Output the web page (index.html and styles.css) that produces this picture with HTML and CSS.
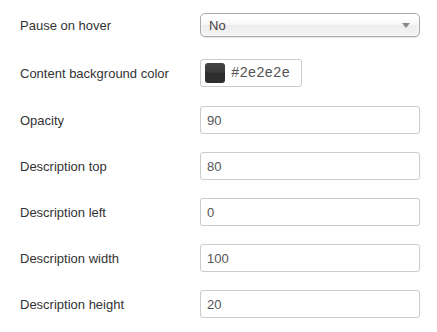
FILE: index.html
```html
<!DOCTYPE html>
<html lang="en">
  <head>
    <meta charset="UTF-8" />
    <meta name="viewport" content="width=device-width, initial-scale=1.0" />
    <title>Slideshow Options</title>
    <link rel="stylesheet" href="styles.css">
  </head>
  <body>
    <div class="options">
      <div class="control-group first">
        <label for="pauseHover">Pause on hover</label>
        <div class="select-box">
          <select id="pauseHover">
            <option value="0" selected>No</option>
            <option value="1">Yes</option>
          </select>
          <span class="arrow"></span>
        </div>
      </div>

      <div class="control-group color-group">
        <label for="bgColor">Content background color</label>
        <div class="color-field">
          <span class="swatch"></span>
          <input type="text" id="bgColor" value="#2e2e2e" />
        </div>
      </div>

      <div class="control-group">
        <label for="opacity">Opacity</label>
        <input type="text" id="opacity" value="90" />
      </div>

      <div class="control-group">
        <label for="descTop">Description top</label>
        <input type="text" id="descTop" value="80" />
      </div>

      <div class="control-group">
        <label for="descLeft">Description left</label>
        <input type="text" id="descLeft" value="0" />
      </div>

      <div class="control-group">
        <label for="descWidth">Description width</label>
        <input type="text" id="descWidth" value="100" />
      </div>

      <div class="control-group">
        <label for="descHeight">Description height</label>
        <input type="text" id="descHeight" value="20" />
      </div>
    </div>
  </body>
</html>
```

FILE: styles.css
```css
body {
  font-family: "Liberation Sans", Arial, sans-serif;
  font-size: 13px;
  margin: 0;
  padding: 13px 0 0 20px;
  background-color: #fff;
  color: #333;
}

.control-group {
  display: flex;
  align-items: center;
  height: 28px;
  margin-bottom: 18px;
}

.control-group.first {
  height: 24px;
  margin-bottom: 22px;
}

.control-group.color-group {
  margin-bottom: 19px;
}

label {
  width: 180px;
  flex-shrink: 0;
}

input[type='text'] {
  box-sizing: border-box;
  width: 220px;
  height: 28px;
  padding: 4px 6px;
  border: 1px solid #ccc;
  border-radius: 3px;
  font-family: "Liberation Sans", Arial, sans-serif;
  font-size: 13px;
  color: #555;
  outline: none;
}

.select-box {
  position: relative;
  width: 220px;
  height: 24px;
}

select {
  appearance: none;
  -webkit-appearance: none;
  box-sizing: border-box;
  width: 100%;
  height: 24px;
  padding: 0 8px;
  border: 1px solid #aaa;
  border-radius: 5px;
  background: linear-gradient(to bottom, #fff 20%, #f6f6f6 50%, #eee 52%, #f4f4f4 100%);
  box-shadow: 0 0 3px #fff inset, 0 1px 1px rgba(0, 0, 0, 0.1);
  font-family: "Liberation Sans", Arial, sans-serif;
  font-size: 13px;
  color: #444;
  outline: none;
}

.arrow {
  position: absolute;
  right: 10px;
  top: 10px;
  border-left: 4px solid transparent;
  border-right: 4px solid transparent;
  border-top: 5px solid #888;
}

.color-field {
  display: flex;
  align-items: center;
  box-sizing: border-box;
  width: 102px;
  height: 28px;
  padding: 0 4px;
  border: 1px solid #ccc;
  border-radius: 3px;
}

.swatch {
  width: 20px;
  height: 20px;
  border-radius: 3px;
  background: linear-gradient(to bottom, #444 0%, #3c3c3c 45%, #2e2e2e 50%, #2e2e2e 100%);
}

.color-field input[type='text'] {
  width: 68px;
  height: 24px;
  padding: 0 0 0 6px;
  border: none;
  font-family: "Liberation Mono", "Courier New", monospace;
  font-size: 14px;
}
```
